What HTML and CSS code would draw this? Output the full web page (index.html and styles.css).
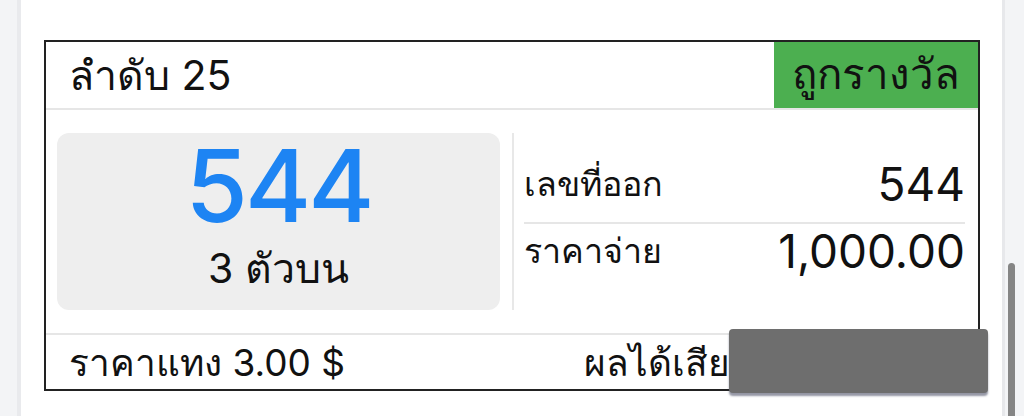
FILE: index.html
```html
<!DOCTYPE html>
<html lang="th">
<head>
<meta charset="utf-8">
<title>ผลรางวัล</title>
<link rel="stylesheet" href="styles.css">
</head>
<body>
<div class="shell">
  <div class="gutter"></div>
  <main class="panel">
    <section class="ticket">
      <header class="ticket-head">
        <div class="ticket-no">ลำดับ 25</div>
        <div class="status win">ถูกรางวัล</div>
      </header>
      <div class="ticket-body">
        <div class="bet-box">
          <div class="bet-number">544</div>
          <div class="bet-type">3 ตัวบน</div>
        </div>
        <div class="vsep"></div>
        <div class="details">
          <div class="detail-row">
            <span class="label">เลขที่ออก</span>
            <span class="value">544</span>
          </div>
          <div class="detail-row">
            <span class="label">ราคาจ่าย</span>
            <span class="value">1,000.00</span>
          </div>
        </div>
      </div>
      <footer class="ticket-foot">
        <span class="stake">ราคาแทง 3.00 $</span>
        <span class="result"><span class="result-label">ผลได้เสีย</span><span class="result-value"></span></span>
      </footer>
      <div class="mask"></div>
    </section>
  </main>
  <aside class="track"><div class="thumb"></div></aside>
</div>
</body>
</html>
```

FILE: styles.css
```css
* { box-sizing: border-box; }

html, body {
  margin: 0;
  height: 416px;
  overflow: hidden;
  background: #f3f4f6;
  font-family: Inter, "Noto Sans", sans-serif;
  color: #111;
}

.shell {
  display: flex;
  height: 416px;
}

.gutter {
  width: 21px;
  flex: none;
  background: linear-gradient(to right, #f3f4f6 0 17px, #e9eaed 17px 21px);
}

.panel {
  width: 981px;
  flex: none;
  background: #fff;
  padding: 40px 0 0 23px;
}

.track {
  flex: 1;
  border-left: 3px solid #e7e8eb;
  background: #f3f4f6;
  padding: 263px 0 0 3px;
}

.thumb {
  width: 7px;
  height: 160px;
  border-radius: 4px;
  background: #858585;
}

/* ticket card */
.ticket {
  position: relative;
  width: 936px;
  border: 2px solid #222;
  background: #fff;
}

.ticket-head {
  display: flex;
  justify-content: space-between;
  height: 68px;
  border-bottom: 2px solid #e6e6e6;
}

.ticket-no {
  padding-left: 23px;
  font-size: 41px;
  line-height: 66px;
}

.status {
  width: 204px;
  font-size: 42px;
  line-height: 64px;
  text-align: center;
}

.status.win { background: #4caf50; }

.ticket-body {
  display: flex;
  align-items: stretch;
  padding: 23px 13px 23px 11px;
  border-bottom: 2px solid #e6e6e6;
}

.bet-box {
  width: 443px;
  height: 177px;
  border-radius: 12px;
  background: #eeeeee;
  display: flex;
  flex-direction: column;
  align-items: center;
  padding-top: 0;
}

.bet-number {
  font-size: 101px;
  font-weight: 500;
  line-height: 104px;
  letter-spacing: -3px;
  color: #1d84f3;
}

.bet-type {
  font-size: 41px;
  line-height: 52px;
  margin-top: 5px;
}

.vsep {
  width: 2px;
  margin: 0 10px 0 12px;
  background: #e8e8e8;
}

.details {
  flex: 1;
  display: flex;
  flex-direction: column;
  justify-content: center;
}

.detail-row {
  display: flex;
  justify-content: space-between;
  align-items: center;
  height: 66px;
  padding-bottom: 9px;
}

.detail-row + .detail-row {
  border-top: 2px solid #e6e6e6;
}

.label { font-size: 34px; }

.value {
  font-size: 46px;
  line-height: 1;
}

.ticket-foot {
  display: flex;
  justify-content: space-between;
  align-items: center;
  height: 54px;
  padding: 0 13px 0 23px;
  font-size: 37px;
}

.result {
  display: flex;
  align-items: center;
}

.result-value {
  width: 235px;
}

/* privacy cover over the result amount */
.mask {
  position: absolute;
  left: 683px;
  top: 287px;
  width: 259px;
  height: 64px;
  border-radius: 4px;
  background: #6e6e6e;
  box-shadow: 0 3px 2px rgba(60, 64, 90, 0.55);
}
```
